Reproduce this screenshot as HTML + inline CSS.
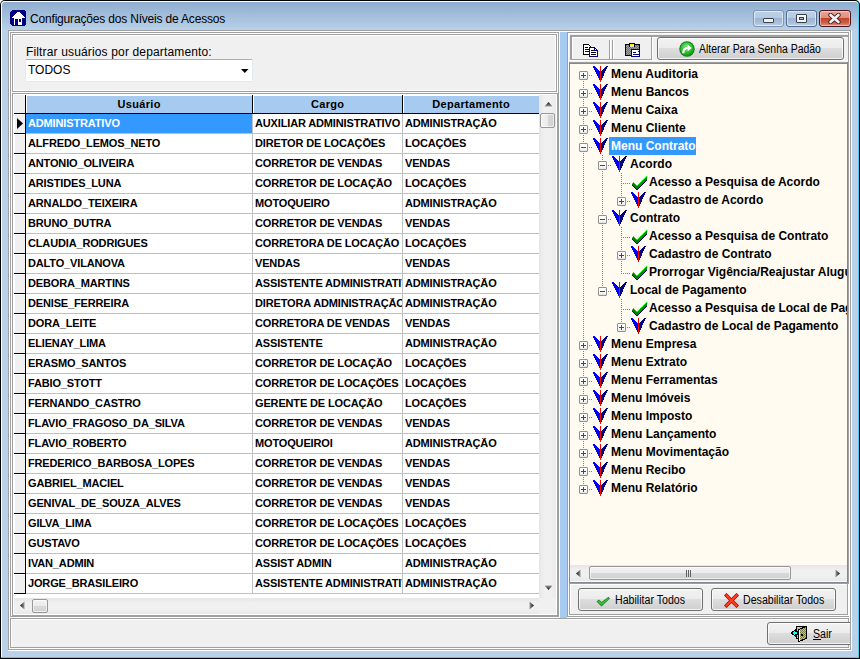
<!DOCTYPE html><html><head><meta charset="utf-8"><style>
html,body{margin:0;padding:0;}
body{width:860px;height:659px;position:relative;overflow:hidden;background:#fff;font-family:"Liberation Sans",sans-serif;}
div,span,svg{position:absolute;}
.t{white-space:pre;line-height:1;}
.b{font-weight:bold;}
.btn{box-sizing:border-box;border:1px solid #707070;border-radius:3px;
 background:linear-gradient(#F2F2F2 0%,#EBEBEB 50%,#DDDDDD 50%,#CFCFCF 100%);
 box-shadow:inset 0 0 0 1px rgba(255,255,255,.75);}
</style></head><body>

<div style="left:0px;top:0px;width:860px;height:659px;background:#000;border-radius:5px 5px 0 0"></div>
<div style="left:1px;top:1px;width:858px;height:657px;background:#4ccff0;border-radius:4px 4px 0 0"></div>
<div style="left:1px;top:1px;width:857px;height:656px;background:#fff;border-radius:4px 4px 0 0"></div>
<div style="left:2px;top:2px;width:856px;height:655px;background:linear-gradient(#8fadcf 0px,#b9d1ea 28px,#b9d1ea 100%);border-radius:3px 3px 0 0"></div>
<svg style="left:10px;top:10px" width="16" height="16" viewBox="0 0 16 16" shape-rendering="crispEdges">
<path d="M2 0H14L16 2V14L14 16H2L0 14V2Z" fill="#000080"/>
<path d="M2 8L7.5 2H9L15 8Z" fill="#fff"/>
<rect x="4" y="8" width="8" height="7" fill="#fff"/>
<rect x="5" y="9" width="3" height="6" fill="#000080"/>
<rect x="9" y="9" width="2" height="3" fill="#000080"/>
</svg>
<span class="t" style="left:30px;top:13px;font-size:12px;color:#000;letter-spacing:-0.18px">Configurações dos Níveis de Acessos</span>
<div style="left:753px;top:10px;width:31px;height:17px;box-sizing:border-box;border:1px solid #8093b0;border-radius:3px;background:linear-gradient(#bcd0e7 0%,#b5cbe4 45%,#9eb6d2 50%,#a6bdd8 75%,#bcd3ec 100%);box-shadow:inset 0 0 0 1px rgba(255,255,255,.55)"></div>
<div style="left:786px;top:10px;width:31px;height:17px;box-sizing:border-box;border:1px solid #56698a;border-radius:3px;background:linear-gradient(#bcd0e7 0%,#b5cbe4 45%,#9eb6d2 50%,#a6bdd8 75%,#bcd3ec 100%);box-shadow:inset 0 0 0 1px rgba(255,255,255,.55)"></div>
<div style="left:819px;top:10px;width:32px;height:17px;box-sizing:border-box;border:1px solid #4b1620;border-radius:3px;background:linear-gradient(#e9a596 0%,#e28e7c 45%,#c5452b 50%,#cc5a3f 75%,#e1917b 100%);box-shadow:inset 0 0 0 1px rgba(255,230,220,.55)"></div>
<div style="left:763px;top:18px;width:11px;height:5px;box-sizing:border-box;border:1px solid #3a3f4c;border-radius:1px;background:#f0f0f0"></div>
<div style="left:796px;top:14px;width:11px;height:9px;box-sizing:border-box;border:1px solid #3a3f4c;border-radius:1px;background:#f4f4f4"></div>
<div style="left:799px;top:17px;width:5px;height:3px;box-sizing:border-box;border:1px solid #3a3f4c;background:#a8bcd4"></div>
<svg style="left:828px;top:13px" width="13" height="11" viewBox="0 0 13 11">
<path d="M2.5 2L10.5 9M10.5 2L2.5 9" stroke="#3c2a2e" stroke-width="4.4" stroke-linecap="round"/>
<path d="M2.5 2L10.5 9M10.5 2L2.5 9" stroke="#f2f2f2" stroke-width="2.6" stroke-linecap="round"/>
</svg>
<div style="left:8px;top:30px;width:844px;height:621px;background:#F0F0F0"></div>
<div style="left:8px;top:30px;width:844px;height:1px;background:#A0A0A0"></div>
<div style="left:8px;top:30px;width:1px;height:621px;background:#A0A0A0"></div>
<div style="left:9px;top:31px;width:842px;height:1px;background:#FFFFFF"></div>
<div style="left:9px;top:31px;width:1px;height:619px;background:#FFFFFF"></div>
<div style="left:8px;top:650px;width:844px;height:1px;background:#FFFFFF"></div>
<div style="left:851px;top:30px;width:1px;height:621px;background:#FFFFFF"></div>
<div style="left:9px;top:649px;width:842px;height:1px;background:#A0A0A0"></div>
<div style="left:850px;top:31px;width:1px;height:619px;background:#A0A0A0"></div>
<div style="left:10px;top:32px;width:550px;height:1px;background:#A0A0A0"></div>
<div style="left:10px;top:32px;width:1px;height:585px;background:#A0A0A0"></div>
<div style="left:11px;top:33px;width:548px;height:1px;background:#FFFFFF"></div>
<div style="left:11px;top:33px;width:1px;height:583px;background:#FFFFFF"></div>
<div style="left:559px;top:32px;width:1px;height:586px;background:#FFFFFF"></div>
<div style="left:10px;top:617px;width:550px;height:1px;background:#FFFFFF"></div>
<div style="left:558px;top:33px;width:1px;height:584px;background:#A0A0A0"></div>
<div style="left:11px;top:616px;width:548px;height:1px;background:#A0A0A0"></div>
<div style="left:12px;top:34px;width:545px;height:1px;background:#A0A0A0"></div>
<div style="left:12px;top:34px;width:1px;height:58px;background:#A0A0A0"></div>
<div style="left:13px;top:35px;width:543px;height:1px;background:#FFFFFF"></div>
<div style="left:13px;top:35px;width:1px;height:56px;background:#FFFFFF"></div>
<div style="left:556px;top:34px;width:1px;height:58px;background:#A0A0A0"></div>
<div style="left:12px;top:91px;width:545px;height:1px;background:#A0A0A0"></div>
<div style="left:555px;top:35px;width:1px;height:56px;background:#FFFFFF"></div>
<div style="left:13px;top:90px;width:543px;height:1px;background:#FFFFFF"></div>
<div style="left:557px;top:34px;width:1px;height:59px;background:#FFFFFF"></div>
<div style="left:12px;top:92px;width:546px;height:1px;background:#FFFFFF"></div>
<span class="t" style="left:26px;top:46px;font-size:12px;color:#000;letter-spacing:0.15px">Filtrar usuários por departamento:</span>
<div style="left:25px;top:59px;width:228px;height:23px;box-sizing:border-box;border:1px solid #e3e9ef;border-top-color:#abadb3;border-radius:2px;background:#fff"></div>
<span class="t" style="left:28px;top:64px;font-size:12px;color:#000">TODOS</span>
<svg style="left:241px;top:69px" width="8" height="5" viewBox="0 0 8 5"><path d="M0 0H7.5L3.75 4Z" fill="#000"/></svg>
<div style="left:12px;top:93px;width:546px;height:1px;background:#A0A0A0"></div>
<div style="left:12px;top:93px;width:1px;height:522px;background:#A0A0A0"></div>
<div style="left:13px;top:94px;width:544px;height:1px;background:#FFFFFF"></div>
<div style="left:13px;top:94px;width:1px;height:520px;background:#FFFFFF"></div>
<div style="left:556px;top:94px;width:1px;height:521px;background:#FFFFFF"></div>
<div style="left:13px;top:614px;width:544px;height:1px;background:#FFFFFF"></div>
<div style="left:557px;top:93px;width:1px;height:523px;background:#A0A0A0"></div>
<div style="left:12px;top:615px;width:546px;height:1px;background:#A0A0A0"></div>
<div style="left:14px;top:95px;width:542px;height:519px;background:#fff"></div>
<div style="left:14px;top:95px;width:11px;height:18px;background:#F0F0F0"></div>
<div style="left:26px;top:95px;width:226px;height:18px;background:#A6CAF0"></div>
<div style="left:26px;top:95px;width:226px;height:1px;background:#FFFFFF"></div>
<div style="left:26px;top:95px;width:1px;height:18px;background:#FFFFFF"></div>
<span class="t b" style="left:26px;top:99px;width:226px;text-align:center;font-size:11px;color:#000;letter-spacing:0.3px;text-indent:0.3px">Usuário</span>
<div style="left:253px;top:95px;width:149px;height:18px;background:#A6CAF0"></div>
<div style="left:253px;top:95px;width:149px;height:1px;background:#FFFFFF"></div>
<div style="left:253px;top:95px;width:1px;height:18px;background:#FFFFFF"></div>
<span class="t b" style="left:253px;top:99px;width:149px;text-align:center;font-size:11px;color:#000;letter-spacing:0.3px;text-indent:0.3px">Cargo</span>
<div style="left:403px;top:95px;width:136px;height:18px;background:#A6CAF0"></div>
<div style="left:403px;top:95px;width:136px;height:1px;background:#FFFFFF"></div>
<div style="left:403px;top:95px;width:1px;height:18px;background:#FFFFFF"></div>
<span class="t b" style="left:403px;top:99px;width:136px;text-align:center;font-size:11px;color:#000;letter-spacing:0.3px;text-indent:0.3px">Departamento</span>
<div style="left:14px;top:113px;width:525px;height:1px;background:#000"></div>
<div style="left:25px;top:95px;width:1px;height:19px;background:#000"></div>
<div style="left:252px;top:95px;width:1px;height:19px;background:#000"></div>
<div style="left:402px;top:95px;width:1px;height:19px;background:#000"></div>
<div style="left:14px;top:114px;width:11px;height:19px;background:#F0F0F0"></div>
<div style="left:14px;top:114px;width:11px;height:1px;background:#FFFFFF"></div>
<div style="left:14px;top:114px;width:1px;height:19px;background:#FFFFFF"></div>
<div style="left:14px;top:133px;width:12px;height:1px;background:#000"></div>
<div style="left:25px;top:114px;width:1px;height:20px;background:#000"></div>
<div style="left:26px;top:114px;width:226px;height:19px;background:#3399FF"></div>
<span class="t b" style="left:28px;top:118px;width:224px;overflow:hidden;font-size:11px;color:#fff;letter-spacing:-0.15px">ADMINISTRATIVO</span>
<span class="t b" style="left:255px;top:118px;width:147px;overflow:hidden;font-size:11px;color:#000;letter-spacing:-0.15px">AUXILIAR ADMINISTRATIVO</span>
<span class="t b" style="left:405px;top:118px;width:134px;overflow:hidden;font-size:11px;color:#000;letter-spacing:-0.15px">ADMINISTRAÇÃO</span>
<div style="left:26px;top:133px;width:513px;height:1px;background:#C0C0C0"></div>
<div style="left:252px;top:114px;width:1px;height:20px;background:#C0C0C0"></div>
<div style="left:402px;top:114px;width:1px;height:20px;background:#C0C0C0"></div>
<div style="left:14px;top:134px;width:11px;height:19px;background:#F0F0F0"></div>
<div style="left:14px;top:134px;width:11px;height:1px;background:#FFFFFF"></div>
<div style="left:14px;top:134px;width:1px;height:19px;background:#FFFFFF"></div>
<div style="left:14px;top:153px;width:12px;height:1px;background:#000"></div>
<div style="left:25px;top:134px;width:1px;height:20px;background:#000"></div>
<span class="t b" style="left:28px;top:138px;width:224px;overflow:hidden;font-size:11px;color:#000;letter-spacing:-0.15px">ALFREDO_LEMOS_NETO</span>
<span class="t b" style="left:255px;top:138px;width:147px;overflow:hidden;font-size:11px;color:#000;letter-spacing:-0.15px">DIRETOR DE LOCAÇÕES</span>
<span class="t b" style="left:405px;top:138px;width:134px;overflow:hidden;font-size:11px;color:#000;letter-spacing:-0.15px">LOCAÇÕES</span>
<div style="left:26px;top:153px;width:513px;height:1px;background:#C0C0C0"></div>
<div style="left:252px;top:134px;width:1px;height:20px;background:#C0C0C0"></div>
<div style="left:402px;top:134px;width:1px;height:20px;background:#C0C0C0"></div>
<div style="left:14px;top:154px;width:11px;height:19px;background:#F0F0F0"></div>
<div style="left:14px;top:154px;width:11px;height:1px;background:#FFFFFF"></div>
<div style="left:14px;top:154px;width:1px;height:19px;background:#FFFFFF"></div>
<div style="left:14px;top:173px;width:12px;height:1px;background:#000"></div>
<div style="left:25px;top:154px;width:1px;height:20px;background:#000"></div>
<span class="t b" style="left:28px;top:158px;width:224px;overflow:hidden;font-size:11px;color:#000;letter-spacing:-0.15px">ANTONIO_OLIVEIRA</span>
<span class="t b" style="left:255px;top:158px;width:147px;overflow:hidden;font-size:11px;color:#000;letter-spacing:-0.15px">CORRETOR DE VENDAS</span>
<span class="t b" style="left:405px;top:158px;width:134px;overflow:hidden;font-size:11px;color:#000;letter-spacing:-0.15px">VENDAS</span>
<div style="left:26px;top:173px;width:513px;height:1px;background:#C0C0C0"></div>
<div style="left:252px;top:154px;width:1px;height:20px;background:#C0C0C0"></div>
<div style="left:402px;top:154px;width:1px;height:20px;background:#C0C0C0"></div>
<div style="left:14px;top:174px;width:11px;height:19px;background:#F0F0F0"></div>
<div style="left:14px;top:174px;width:11px;height:1px;background:#FFFFFF"></div>
<div style="left:14px;top:174px;width:1px;height:19px;background:#FFFFFF"></div>
<div style="left:14px;top:193px;width:12px;height:1px;background:#000"></div>
<div style="left:25px;top:174px;width:1px;height:20px;background:#000"></div>
<span class="t b" style="left:28px;top:178px;width:224px;overflow:hidden;font-size:11px;color:#000;letter-spacing:-0.15px">ARISTIDES_LUNA</span>
<span class="t b" style="left:255px;top:178px;width:147px;overflow:hidden;font-size:11px;color:#000;letter-spacing:-0.15px">CORRETOR DE LOCAÇÃO</span>
<span class="t b" style="left:405px;top:178px;width:134px;overflow:hidden;font-size:11px;color:#000;letter-spacing:-0.15px">LOCAÇÕES</span>
<div style="left:26px;top:193px;width:513px;height:1px;background:#C0C0C0"></div>
<div style="left:252px;top:174px;width:1px;height:20px;background:#C0C0C0"></div>
<div style="left:402px;top:174px;width:1px;height:20px;background:#C0C0C0"></div>
<div style="left:14px;top:194px;width:11px;height:19px;background:#F0F0F0"></div>
<div style="left:14px;top:194px;width:11px;height:1px;background:#FFFFFF"></div>
<div style="left:14px;top:194px;width:1px;height:19px;background:#FFFFFF"></div>
<div style="left:14px;top:213px;width:12px;height:1px;background:#000"></div>
<div style="left:25px;top:194px;width:1px;height:20px;background:#000"></div>
<span class="t b" style="left:28px;top:198px;width:224px;overflow:hidden;font-size:11px;color:#000;letter-spacing:-0.15px">ARNALDO_TEIXEIRA</span>
<span class="t b" style="left:255px;top:198px;width:147px;overflow:hidden;font-size:11px;color:#000;letter-spacing:-0.15px">MOTOQUEIRO</span>
<span class="t b" style="left:405px;top:198px;width:134px;overflow:hidden;font-size:11px;color:#000;letter-spacing:-0.15px">ADMINISTRAÇÃO</span>
<div style="left:26px;top:213px;width:513px;height:1px;background:#C0C0C0"></div>
<div style="left:252px;top:194px;width:1px;height:20px;background:#C0C0C0"></div>
<div style="left:402px;top:194px;width:1px;height:20px;background:#C0C0C0"></div>
<div style="left:14px;top:214px;width:11px;height:19px;background:#F0F0F0"></div>
<div style="left:14px;top:214px;width:11px;height:1px;background:#FFFFFF"></div>
<div style="left:14px;top:214px;width:1px;height:19px;background:#FFFFFF"></div>
<div style="left:14px;top:233px;width:12px;height:1px;background:#000"></div>
<div style="left:25px;top:214px;width:1px;height:20px;background:#000"></div>
<span class="t b" style="left:28px;top:218px;width:224px;overflow:hidden;font-size:11px;color:#000;letter-spacing:-0.15px">BRUNO_DUTRA</span>
<span class="t b" style="left:255px;top:218px;width:147px;overflow:hidden;font-size:11px;color:#000;letter-spacing:-0.15px">CORRETOR DE VENDAS</span>
<span class="t b" style="left:405px;top:218px;width:134px;overflow:hidden;font-size:11px;color:#000;letter-spacing:-0.15px">VENDAS</span>
<div style="left:26px;top:233px;width:513px;height:1px;background:#C0C0C0"></div>
<div style="left:252px;top:214px;width:1px;height:20px;background:#C0C0C0"></div>
<div style="left:402px;top:214px;width:1px;height:20px;background:#C0C0C0"></div>
<div style="left:14px;top:234px;width:11px;height:19px;background:#F0F0F0"></div>
<div style="left:14px;top:234px;width:11px;height:1px;background:#FFFFFF"></div>
<div style="left:14px;top:234px;width:1px;height:19px;background:#FFFFFF"></div>
<div style="left:14px;top:253px;width:12px;height:1px;background:#000"></div>
<div style="left:25px;top:234px;width:1px;height:20px;background:#000"></div>
<span class="t b" style="left:28px;top:238px;width:224px;overflow:hidden;font-size:11px;color:#000;letter-spacing:-0.15px">CLAUDIA_RODRIGUES</span>
<span class="t b" style="left:255px;top:238px;width:147px;overflow:hidden;font-size:11px;color:#000;letter-spacing:-0.15px">CORRETORA DE LOCAÇÃO</span>
<span class="t b" style="left:405px;top:238px;width:134px;overflow:hidden;font-size:11px;color:#000;letter-spacing:-0.15px">LOCAÇÕES</span>
<div style="left:26px;top:253px;width:513px;height:1px;background:#C0C0C0"></div>
<div style="left:252px;top:234px;width:1px;height:20px;background:#C0C0C0"></div>
<div style="left:402px;top:234px;width:1px;height:20px;background:#C0C0C0"></div>
<div style="left:14px;top:254px;width:11px;height:19px;background:#F0F0F0"></div>
<div style="left:14px;top:254px;width:11px;height:1px;background:#FFFFFF"></div>
<div style="left:14px;top:254px;width:1px;height:19px;background:#FFFFFF"></div>
<div style="left:14px;top:273px;width:12px;height:1px;background:#000"></div>
<div style="left:25px;top:254px;width:1px;height:20px;background:#000"></div>
<span class="t b" style="left:28px;top:258px;width:224px;overflow:hidden;font-size:11px;color:#000;letter-spacing:-0.15px">DALTO_VILANOVA</span>
<span class="t b" style="left:255px;top:258px;width:147px;overflow:hidden;font-size:11px;color:#000;letter-spacing:-0.15px">VENDAS</span>
<span class="t b" style="left:405px;top:258px;width:134px;overflow:hidden;font-size:11px;color:#000;letter-spacing:-0.15px">VENDAS</span>
<div style="left:26px;top:273px;width:513px;height:1px;background:#C0C0C0"></div>
<div style="left:252px;top:254px;width:1px;height:20px;background:#C0C0C0"></div>
<div style="left:402px;top:254px;width:1px;height:20px;background:#C0C0C0"></div>
<div style="left:14px;top:274px;width:11px;height:19px;background:#F0F0F0"></div>
<div style="left:14px;top:274px;width:11px;height:1px;background:#FFFFFF"></div>
<div style="left:14px;top:274px;width:1px;height:19px;background:#FFFFFF"></div>
<div style="left:14px;top:293px;width:12px;height:1px;background:#000"></div>
<div style="left:25px;top:274px;width:1px;height:20px;background:#000"></div>
<span class="t b" style="left:28px;top:278px;width:224px;overflow:hidden;font-size:11px;color:#000;letter-spacing:-0.15px">DEBORA_MARTINS</span>
<span class="t b" style="left:255px;top:278px;width:147px;overflow:hidden;font-size:11px;color:#000;letter-spacing:-0.15px">ASSISTENTE ADMINISTRATIVO</span>
<span class="t b" style="left:405px;top:278px;width:134px;overflow:hidden;font-size:11px;color:#000;letter-spacing:-0.15px">ADMINISTRAÇÃO</span>
<div style="left:26px;top:293px;width:513px;height:1px;background:#C0C0C0"></div>
<div style="left:252px;top:274px;width:1px;height:20px;background:#C0C0C0"></div>
<div style="left:402px;top:274px;width:1px;height:20px;background:#C0C0C0"></div>
<div style="left:14px;top:294px;width:11px;height:19px;background:#F0F0F0"></div>
<div style="left:14px;top:294px;width:11px;height:1px;background:#FFFFFF"></div>
<div style="left:14px;top:294px;width:1px;height:19px;background:#FFFFFF"></div>
<div style="left:14px;top:313px;width:12px;height:1px;background:#000"></div>
<div style="left:25px;top:294px;width:1px;height:20px;background:#000"></div>
<span class="t b" style="left:28px;top:298px;width:224px;overflow:hidden;font-size:11px;color:#000;letter-spacing:-0.15px">DENISE_FERREIRA</span>
<span class="t b" style="left:255px;top:298px;width:147px;overflow:hidden;font-size:11px;color:#000;letter-spacing:-0.15px">DIRETORA ADMINISTRAÇÃO</span>
<span class="t b" style="left:405px;top:298px;width:134px;overflow:hidden;font-size:11px;color:#000;letter-spacing:-0.15px">ADMINISTRAÇÃO</span>
<div style="left:26px;top:313px;width:513px;height:1px;background:#C0C0C0"></div>
<div style="left:252px;top:294px;width:1px;height:20px;background:#C0C0C0"></div>
<div style="left:402px;top:294px;width:1px;height:20px;background:#C0C0C0"></div>
<div style="left:14px;top:314px;width:11px;height:19px;background:#F0F0F0"></div>
<div style="left:14px;top:314px;width:11px;height:1px;background:#FFFFFF"></div>
<div style="left:14px;top:314px;width:1px;height:19px;background:#FFFFFF"></div>
<div style="left:14px;top:333px;width:12px;height:1px;background:#000"></div>
<div style="left:25px;top:314px;width:1px;height:20px;background:#000"></div>
<span class="t b" style="left:28px;top:318px;width:224px;overflow:hidden;font-size:11px;color:#000;letter-spacing:-0.15px">DORA_LEITE</span>
<span class="t b" style="left:255px;top:318px;width:147px;overflow:hidden;font-size:11px;color:#000;letter-spacing:-0.15px">CORRETORA DE VENDAS</span>
<span class="t b" style="left:405px;top:318px;width:134px;overflow:hidden;font-size:11px;color:#000;letter-spacing:-0.15px">VENDAS</span>
<div style="left:26px;top:333px;width:513px;height:1px;background:#C0C0C0"></div>
<div style="left:252px;top:314px;width:1px;height:20px;background:#C0C0C0"></div>
<div style="left:402px;top:314px;width:1px;height:20px;background:#C0C0C0"></div>
<div style="left:14px;top:334px;width:11px;height:19px;background:#F0F0F0"></div>
<div style="left:14px;top:334px;width:11px;height:1px;background:#FFFFFF"></div>
<div style="left:14px;top:334px;width:1px;height:19px;background:#FFFFFF"></div>
<div style="left:14px;top:353px;width:12px;height:1px;background:#000"></div>
<div style="left:25px;top:334px;width:1px;height:20px;background:#000"></div>
<span class="t b" style="left:28px;top:338px;width:224px;overflow:hidden;font-size:11px;color:#000;letter-spacing:-0.15px">ELIENAY_LIMA</span>
<span class="t b" style="left:255px;top:338px;width:147px;overflow:hidden;font-size:11px;color:#000;letter-spacing:-0.15px">ASSISTENTE</span>
<span class="t b" style="left:405px;top:338px;width:134px;overflow:hidden;font-size:11px;color:#000;letter-spacing:-0.15px">ADMINISTRAÇÃO</span>
<div style="left:26px;top:353px;width:513px;height:1px;background:#C0C0C0"></div>
<div style="left:252px;top:334px;width:1px;height:20px;background:#C0C0C0"></div>
<div style="left:402px;top:334px;width:1px;height:20px;background:#C0C0C0"></div>
<div style="left:14px;top:354px;width:11px;height:19px;background:#F0F0F0"></div>
<div style="left:14px;top:354px;width:11px;height:1px;background:#FFFFFF"></div>
<div style="left:14px;top:354px;width:1px;height:19px;background:#FFFFFF"></div>
<div style="left:14px;top:373px;width:12px;height:1px;background:#000"></div>
<div style="left:25px;top:354px;width:1px;height:20px;background:#000"></div>
<span class="t b" style="left:28px;top:358px;width:224px;overflow:hidden;font-size:11px;color:#000;letter-spacing:-0.15px">ERASMO_SANTOS</span>
<span class="t b" style="left:255px;top:358px;width:147px;overflow:hidden;font-size:11px;color:#000;letter-spacing:-0.15px">CORRETOR DE LOCAÇÃO</span>
<span class="t b" style="left:405px;top:358px;width:134px;overflow:hidden;font-size:11px;color:#000;letter-spacing:-0.15px">LOCAÇÕES</span>
<div style="left:26px;top:373px;width:513px;height:1px;background:#C0C0C0"></div>
<div style="left:252px;top:354px;width:1px;height:20px;background:#C0C0C0"></div>
<div style="left:402px;top:354px;width:1px;height:20px;background:#C0C0C0"></div>
<div style="left:14px;top:374px;width:11px;height:19px;background:#F0F0F0"></div>
<div style="left:14px;top:374px;width:11px;height:1px;background:#FFFFFF"></div>
<div style="left:14px;top:374px;width:1px;height:19px;background:#FFFFFF"></div>
<div style="left:14px;top:393px;width:12px;height:1px;background:#000"></div>
<div style="left:25px;top:374px;width:1px;height:20px;background:#000"></div>
<span class="t b" style="left:28px;top:378px;width:224px;overflow:hidden;font-size:11px;color:#000;letter-spacing:-0.15px">FABIO_STOTT</span>
<span class="t b" style="left:255px;top:378px;width:147px;overflow:hidden;font-size:11px;color:#000;letter-spacing:-0.15px">CORRETOR DE LOCAÇÕES</span>
<span class="t b" style="left:405px;top:378px;width:134px;overflow:hidden;font-size:11px;color:#000;letter-spacing:-0.15px">LOCAÇÕES</span>
<div style="left:26px;top:393px;width:513px;height:1px;background:#C0C0C0"></div>
<div style="left:252px;top:374px;width:1px;height:20px;background:#C0C0C0"></div>
<div style="left:402px;top:374px;width:1px;height:20px;background:#C0C0C0"></div>
<div style="left:14px;top:394px;width:11px;height:19px;background:#F0F0F0"></div>
<div style="left:14px;top:394px;width:11px;height:1px;background:#FFFFFF"></div>
<div style="left:14px;top:394px;width:1px;height:19px;background:#FFFFFF"></div>
<div style="left:14px;top:413px;width:12px;height:1px;background:#000"></div>
<div style="left:25px;top:394px;width:1px;height:20px;background:#000"></div>
<span class="t b" style="left:28px;top:398px;width:224px;overflow:hidden;font-size:11px;color:#000;letter-spacing:-0.15px">FERNANDO_CASTRO</span>
<span class="t b" style="left:255px;top:398px;width:147px;overflow:hidden;font-size:11px;color:#000;letter-spacing:-0.15px">GERENTE DE LOCAÇÃO</span>
<span class="t b" style="left:405px;top:398px;width:134px;overflow:hidden;font-size:11px;color:#000;letter-spacing:-0.15px">LOCAÇÕES</span>
<div style="left:26px;top:413px;width:513px;height:1px;background:#C0C0C0"></div>
<div style="left:252px;top:394px;width:1px;height:20px;background:#C0C0C0"></div>
<div style="left:402px;top:394px;width:1px;height:20px;background:#C0C0C0"></div>
<div style="left:14px;top:414px;width:11px;height:19px;background:#F0F0F0"></div>
<div style="left:14px;top:414px;width:11px;height:1px;background:#FFFFFF"></div>
<div style="left:14px;top:414px;width:1px;height:19px;background:#FFFFFF"></div>
<div style="left:14px;top:433px;width:12px;height:1px;background:#000"></div>
<div style="left:25px;top:414px;width:1px;height:20px;background:#000"></div>
<span class="t b" style="left:28px;top:418px;width:224px;overflow:hidden;font-size:11px;color:#000;letter-spacing:-0.15px">FLAVIO_FRAGOSO_DA_SILVA</span>
<span class="t b" style="left:255px;top:418px;width:147px;overflow:hidden;font-size:11px;color:#000;letter-spacing:-0.15px">CORRETOR DE VENDAS</span>
<span class="t b" style="left:405px;top:418px;width:134px;overflow:hidden;font-size:11px;color:#000;letter-spacing:-0.15px">VENDAS</span>
<div style="left:26px;top:433px;width:513px;height:1px;background:#C0C0C0"></div>
<div style="left:252px;top:414px;width:1px;height:20px;background:#C0C0C0"></div>
<div style="left:402px;top:414px;width:1px;height:20px;background:#C0C0C0"></div>
<div style="left:14px;top:434px;width:11px;height:19px;background:#F0F0F0"></div>
<div style="left:14px;top:434px;width:11px;height:1px;background:#FFFFFF"></div>
<div style="left:14px;top:434px;width:1px;height:19px;background:#FFFFFF"></div>
<div style="left:14px;top:453px;width:12px;height:1px;background:#000"></div>
<div style="left:25px;top:434px;width:1px;height:20px;background:#000"></div>
<span class="t b" style="left:28px;top:438px;width:224px;overflow:hidden;font-size:11px;color:#000;letter-spacing:-0.15px">FLAVIO_ROBERTO</span>
<span class="t b" style="left:255px;top:438px;width:147px;overflow:hidden;font-size:11px;color:#000;letter-spacing:-0.15px">MOTOQUEIROI</span>
<span class="t b" style="left:405px;top:438px;width:134px;overflow:hidden;font-size:11px;color:#000;letter-spacing:-0.15px">ADMINISTRAÇÃO</span>
<div style="left:26px;top:453px;width:513px;height:1px;background:#C0C0C0"></div>
<div style="left:252px;top:434px;width:1px;height:20px;background:#C0C0C0"></div>
<div style="left:402px;top:434px;width:1px;height:20px;background:#C0C0C0"></div>
<div style="left:14px;top:454px;width:11px;height:19px;background:#F0F0F0"></div>
<div style="left:14px;top:454px;width:11px;height:1px;background:#FFFFFF"></div>
<div style="left:14px;top:454px;width:1px;height:19px;background:#FFFFFF"></div>
<div style="left:14px;top:473px;width:12px;height:1px;background:#000"></div>
<div style="left:25px;top:454px;width:1px;height:20px;background:#000"></div>
<span class="t b" style="left:28px;top:458px;width:224px;overflow:hidden;font-size:11px;color:#000;letter-spacing:-0.15px">FREDERICO_BARBOSA_LOPES</span>
<span class="t b" style="left:255px;top:458px;width:147px;overflow:hidden;font-size:11px;color:#000;letter-spacing:-0.15px">CORRETOR DE VENDAS</span>
<span class="t b" style="left:405px;top:458px;width:134px;overflow:hidden;font-size:11px;color:#000;letter-spacing:-0.15px">VENDAS</span>
<div style="left:26px;top:473px;width:513px;height:1px;background:#C0C0C0"></div>
<div style="left:252px;top:454px;width:1px;height:20px;background:#C0C0C0"></div>
<div style="left:402px;top:454px;width:1px;height:20px;background:#C0C0C0"></div>
<div style="left:14px;top:474px;width:11px;height:19px;background:#F0F0F0"></div>
<div style="left:14px;top:474px;width:11px;height:1px;background:#FFFFFF"></div>
<div style="left:14px;top:474px;width:1px;height:19px;background:#FFFFFF"></div>
<div style="left:14px;top:493px;width:12px;height:1px;background:#000"></div>
<div style="left:25px;top:474px;width:1px;height:20px;background:#000"></div>
<span class="t b" style="left:28px;top:478px;width:224px;overflow:hidden;font-size:11px;color:#000;letter-spacing:-0.15px">GABRIEL_MACIEL</span>
<span class="t b" style="left:255px;top:478px;width:147px;overflow:hidden;font-size:11px;color:#000;letter-spacing:-0.15px">CORRETOR DE VENDAS</span>
<span class="t b" style="left:405px;top:478px;width:134px;overflow:hidden;font-size:11px;color:#000;letter-spacing:-0.15px">VENDAS</span>
<div style="left:26px;top:493px;width:513px;height:1px;background:#C0C0C0"></div>
<div style="left:252px;top:474px;width:1px;height:20px;background:#C0C0C0"></div>
<div style="left:402px;top:474px;width:1px;height:20px;background:#C0C0C0"></div>
<div style="left:14px;top:494px;width:11px;height:19px;background:#F0F0F0"></div>
<div style="left:14px;top:494px;width:11px;height:1px;background:#FFFFFF"></div>
<div style="left:14px;top:494px;width:1px;height:19px;background:#FFFFFF"></div>
<div style="left:14px;top:513px;width:12px;height:1px;background:#000"></div>
<div style="left:25px;top:494px;width:1px;height:20px;background:#000"></div>
<span class="t b" style="left:28px;top:498px;width:224px;overflow:hidden;font-size:11px;color:#000;letter-spacing:-0.15px">GENIVAL_DE_SOUZA_ALVES</span>
<span class="t b" style="left:255px;top:498px;width:147px;overflow:hidden;font-size:11px;color:#000;letter-spacing:-0.15px">CORRETOR DE VENDAS</span>
<span class="t b" style="left:405px;top:498px;width:134px;overflow:hidden;font-size:11px;color:#000;letter-spacing:-0.15px">VENDAS</span>
<div style="left:26px;top:513px;width:513px;height:1px;background:#C0C0C0"></div>
<div style="left:252px;top:494px;width:1px;height:20px;background:#C0C0C0"></div>
<div style="left:402px;top:494px;width:1px;height:20px;background:#C0C0C0"></div>
<div style="left:14px;top:514px;width:11px;height:19px;background:#F0F0F0"></div>
<div style="left:14px;top:514px;width:11px;height:1px;background:#FFFFFF"></div>
<div style="left:14px;top:514px;width:1px;height:19px;background:#FFFFFF"></div>
<div style="left:14px;top:533px;width:12px;height:1px;background:#000"></div>
<div style="left:25px;top:514px;width:1px;height:20px;background:#000"></div>
<span class="t b" style="left:28px;top:518px;width:224px;overflow:hidden;font-size:11px;color:#000;letter-spacing:-0.15px">GILVA_LIMA</span>
<span class="t b" style="left:255px;top:518px;width:147px;overflow:hidden;font-size:11px;color:#000;letter-spacing:-0.15px">CORRETOR DE LOCAÇÕES</span>
<span class="t b" style="left:405px;top:518px;width:134px;overflow:hidden;font-size:11px;color:#000;letter-spacing:-0.15px">LOCAÇÕES</span>
<div style="left:26px;top:533px;width:513px;height:1px;background:#C0C0C0"></div>
<div style="left:252px;top:514px;width:1px;height:20px;background:#C0C0C0"></div>
<div style="left:402px;top:514px;width:1px;height:20px;background:#C0C0C0"></div>
<div style="left:14px;top:534px;width:11px;height:19px;background:#F0F0F0"></div>
<div style="left:14px;top:534px;width:11px;height:1px;background:#FFFFFF"></div>
<div style="left:14px;top:534px;width:1px;height:19px;background:#FFFFFF"></div>
<div style="left:14px;top:553px;width:12px;height:1px;background:#000"></div>
<div style="left:25px;top:534px;width:1px;height:20px;background:#000"></div>
<span class="t b" style="left:28px;top:538px;width:224px;overflow:hidden;font-size:11px;color:#000;letter-spacing:-0.15px">GUSTAVO</span>
<span class="t b" style="left:255px;top:538px;width:147px;overflow:hidden;font-size:11px;color:#000;letter-spacing:-0.15px">CORRETOR DE LOCAÇÕES</span>
<span class="t b" style="left:405px;top:538px;width:134px;overflow:hidden;font-size:11px;color:#000;letter-spacing:-0.15px">LOCAÇÕES</span>
<div style="left:26px;top:553px;width:513px;height:1px;background:#C0C0C0"></div>
<div style="left:252px;top:534px;width:1px;height:20px;background:#C0C0C0"></div>
<div style="left:402px;top:534px;width:1px;height:20px;background:#C0C0C0"></div>
<div style="left:14px;top:554px;width:11px;height:19px;background:#F0F0F0"></div>
<div style="left:14px;top:554px;width:11px;height:1px;background:#FFFFFF"></div>
<div style="left:14px;top:554px;width:1px;height:19px;background:#FFFFFF"></div>
<div style="left:14px;top:573px;width:12px;height:1px;background:#000"></div>
<div style="left:25px;top:554px;width:1px;height:20px;background:#000"></div>
<span class="t b" style="left:28px;top:558px;width:224px;overflow:hidden;font-size:11px;color:#000;letter-spacing:-0.15px">IVAN_ADMIN</span>
<span class="t b" style="left:255px;top:558px;width:147px;overflow:hidden;font-size:11px;color:#000;letter-spacing:-0.15px">ASSIST ADMIN</span>
<span class="t b" style="left:405px;top:558px;width:134px;overflow:hidden;font-size:11px;color:#000;letter-spacing:-0.15px">ADMINISTRAÇÃO</span>
<div style="left:26px;top:573px;width:513px;height:1px;background:#C0C0C0"></div>
<div style="left:252px;top:554px;width:1px;height:20px;background:#C0C0C0"></div>
<div style="left:402px;top:554px;width:1px;height:20px;background:#C0C0C0"></div>
<div style="left:14px;top:574px;width:11px;height:19px;background:#F0F0F0"></div>
<div style="left:14px;top:574px;width:11px;height:1px;background:#FFFFFF"></div>
<div style="left:14px;top:574px;width:1px;height:19px;background:#FFFFFF"></div>
<div style="left:14px;top:593px;width:12px;height:1px;background:#000"></div>
<div style="left:25px;top:574px;width:1px;height:20px;background:#000"></div>
<span class="t b" style="left:28px;top:578px;width:224px;overflow:hidden;font-size:11px;color:#000;letter-spacing:-0.15px">JORGE_BRASILEIRO</span>
<span class="t b" style="left:255px;top:578px;width:147px;overflow:hidden;font-size:11px;color:#000;letter-spacing:-0.15px">ASSISTENTE ADMINISTRATIVO</span>
<span class="t b" style="left:405px;top:578px;width:134px;overflow:hidden;font-size:11px;color:#000;letter-spacing:-0.15px">ADMINISTRAÇÃO</span>
<div style="left:26px;top:593px;width:513px;height:1px;background:#C0C0C0"></div>
<div style="left:252px;top:574px;width:1px;height:20px;background:#C0C0C0"></div>
<div style="left:402px;top:574px;width:1px;height:20px;background:#C0C0C0"></div>
<svg style="left:17px;top:118px" width="7" height="12" viewBox="0 0 7 12"><path d="M0 0L6 5.5L0 11Z" fill="#000"/></svg>
<div style="left:539px;top:95px;width:17px;height:503px;background:linear-gradient(90deg,#e6e6e6,#f0f0f0 30%,#f0f0f0 70%,#e9e9e9)"></div>
<svg style="left:544px;top:101px" width="9" height="6" viewBox="0 0 9 6"><defs><linearGradient id="gu" x1="0" y1="0" x2="0" y2="1"><stop offset="0" stop-color="#111"/><stop offset="1" stop-color="#9a9a9a"/></linearGradient></defs><path d="M0.5 5.5H8.5L4.5 1Z" fill="url(#gu)"/></svg>
<svg style="left:544px;top:585px" width="9" height="6" viewBox="0 0 9 6"><defs><linearGradient id="gd" x1="0" y1="1" x2="0" y2="0"><stop offset="0" stop-color="#111"/><stop offset="1" stop-color="#9a9a9a"/></linearGradient></defs><path d="M0.5 0.5H8.5L4.5 5Z" fill="url(#gd)"/></svg>
<div style="left:540px;top:113px;width:15px;height:15px;box-sizing:border-box;border:1px solid #979797;border-radius:2px;background:linear-gradient(90deg,#f2f2f2 0%,#ebebeb 50%,#d9d9da 50%,#d0d0d2 100%);box-shadow:inset 0 0 0 1px rgba(255,255,255,.6)"></div>
<div style="left:14px;top:598px;width:525px;height:16px;background:linear-gradient(#e6e6e6,#f0f0f0 30%,#f0f0f0 70%,#e9e9e9)"></div>
<svg style="left:19px;top:601px" width="6" height="9" viewBox="0 0 6 9"><defs><linearGradient id="gl" x1="0" y1="0" x2="1" y2="0"><stop offset="0" stop-color="#111"/><stop offset="1" stop-color="#9a9a9a"/></linearGradient></defs><path d="M5.5 0.5V8.5L1 4.5Z" fill="url(#gl)"/></svg>
<svg style="left:529px;top:601px" width="6" height="9" viewBox="0 0 6 9"><defs><linearGradient id="gr" x1="1" y1="0" x2="0" y2="0"><stop offset="0" stop-color="#111"/><stop offset="1" stop-color="#9a9a9a"/></linearGradient></defs><path d="M0.5 0.5V8.5L5 4.5Z" fill="url(#gr)"/></svg>
<div style="left:32px;top:599px;width:16px;height:14px;box-sizing:border-box;border:1px solid #979797;border-radius:2px;background:linear-gradient(#f2f2f2 0%,#ebebeb 50%,#d9d9da 50%,#d0d0d2 100%);box-shadow:inset 0 0 0 1px rgba(255,255,255,.6)"></div>
<div style="left:539px;top:598px;width:17px;height:16px;background:#F0F0F0"></div>
<div style="left:560px;top:32px;width:7px;height:586px;background:#A6CAF0"></div>
<div style="left:567px;top:32px;width:1px;height:586px;background:#A0A0A0"></div>
<div style="left:567px;top:32px;width:283px;height:1px;background:#A0A0A0"></div>
<div style="left:568px;top:33px;width:1px;height:584px;background:#FFFFFF"></div>
<div style="left:568px;top:33px;width:281px;height:1px;background:#FFFFFF"></div>
<div style="left:849px;top:32px;width:1px;height:586px;background:#FFFFFF"></div>
<div style="left:567px;top:617px;width:283px;height:1px;background:#FFFFFF"></div>
<div style="left:848px;top:33px;width:1px;height:584px;background:#A0A0A0"></div>
<div style="left:568px;top:616px;width:281px;height:1px;background:#A0A0A0"></div>
<div style="left:570px;top:35px;width:278px;height:1px;background:#A0A0A0"></div>
<div style="left:570px;top:36px;width:278px;height:1px;background:#A0A0A0"></div>
<div style="left:570px;top:35px;width:1px;height:25px;background:#A0A0A0"></div>
<div style="left:571px;top:35px;width:1px;height:25px;background:#A0A0A0"></div>
<div style="left:572px;top:37px;width:275px;height:1px;background:#FFFFFF"></div>
<div style="left:572px;top:37px;width:1px;height:22px;background:#FFFFFF"></div>
<div style="left:570px;top:59px;width:82px;height:1px;background:#A0A0A0"></div>
<div style="left:651px;top:37px;width:1px;height:23px;background:#A0A0A0"></div>
<div style="left:652px;top:37px;width:1px;height:24px;background:#FFFFFF"></div>
<div style="left:570px;top:60px;width:278px;height:1px;background:#FFFFFF"></div>
<div style="left:609px;top:40px;width:1px;height:19px;background:#A0A0A0"></div>
<div style="left:612px;top:40px;width:1px;height:19px;background:#A0A0A0"></div>
<div style="left:610px;top:40px;width:1px;height:19px;background:#FFFFFF"></div>
<div style="left:613px;top:40px;width:1px;height:19px;background:#FFFFFF"></div>
<svg style="left:583px;top:44px" width="16" height="14" viewBox="0 0 16 14" shape-rendering="crispEdges">
<path d="M0.5 0.5H5.5L7.5 2.5V10.5H0.5Z" fill="#fff" stroke="#000"/>
<rect x="2" y="3" width="3" height="1" fill="#000"/><rect x="2" y="5" width="5" height="1" fill="#000"/><rect x="2" y="7" width="5" height="1" fill="#000"/>
<path d="M6.5 3.5H11.5L14.5 6.5V12.5H6.5Z" fill="#fff" stroke="#000080"/>
<rect x="11" y="4" width="1" height="3" fill="#000080"/><rect x="11" y="6" width="3" height="1" fill="#000080"/>
<rect x="8" y="6" width="3" height="1" fill="#000"/><rect x="8" y="8" width="5" height="1" fill="#000"/><rect x="8" y="10" width="5" height="1" fill="#000"/>
</svg>
<svg style="left:625px;top:43px" width="16" height="14" viewBox="0 0 16 14" shape-rendering="crispEdges">
<defs><pattern id="ck2" width="2" height="2" patternUnits="userSpaceOnUse"><rect width="2" height="2" fill="#808000"/><rect width="1" height="1" fill="#a0a0a0"/><rect x="1" y="1" width="1" height="1" fill="#a0a0a0"/></pattern></defs>
<path d="M0.5 1.5H14.5V12.5H0.5Z" fill="url(#ck2)" stroke="#000"/>
<path d="M4.5 0.5H9.5V3.5H4.5Z" fill="#ffff00" stroke="#000"/>
<rect x="4" y="3" width="6" height="1" fill="#000"/><rect x="5" y="3" width="4" height="1" fill="#e0e0e0"/>
<path d="M6.5 6.5H14.5V13.5H6.5Z" fill="#fff" stroke="#000080"/>
<rect x="13" y="8" width="1" height="1" fill="#000080"/>
<rect x="8" y="9" width="3" height="1" fill="#000080"/><rect x="8" y="11" width="6" height="1" fill="#000080"/>
</svg>
<div class="btn" style="left:657px;top:37px;width:187px;height:23px"></div>
<svg style="left:679px;top:41px" width="16" height="16" viewBox="0 0 16 16">
<defs><radialGradient id="gg" cx="0.45" cy="0.35" r="0.65"><stop offset="0" stop-color="#7ee87e"/><stop offset="0.6" stop-color="#2fbf2f"/><stop offset="1" stop-color="#169a16"/></radialGradient></defs>
<circle cx="8" cy="8" r="7.7" fill="#0f7f0f"/>
<circle cx="8" cy="8" r="6.8" fill="url(#gg)"/>
<path d="M4.2 12.3C4.2 8.6 6.2 6.9 9.2 6.9" stroke="#fff" stroke-width="2.3" fill="none"/>
<path d="M8.6 3.4L12.8 7L8.6 10.6Z" fill="#fff"/>
</svg>
<span class="t" style="left:699px;top:43px;font-size:12px;color:#000;transform:scaleX(0.87);transform-origin:0 0">Alterar Para Senha Padão</span>
<div style="left:569px;top:62px;width:279px;height:1px;background:#a0a0a0"></div>
<div style="left:569px;top:63px;width:279px;height:1px;background:#828790"></div>
<div style="left:569px;top:62px;width:1px;height:521px;background:#828790"></div>
<div style="left:569px;top:582px;width:279px;height:1px;background:#828790"></div>
<div style="left:569px;top:583px;width:279px;height:1px;background:#9a9ea6"></div>
<div style="left:847px;top:62px;width:1px;height:521px;background:#828790"></div>
<div style="left:570px;top:64px;width:277px;height:518px;background:#FFFBF0"></div>
<div style="left:570px;top:565px;width:277px;height:16px;background:linear-gradient(#e6e6e6,#f0f0f0 30%,#f0f0f0 70%,#e9e9e9)"></div>
<svg style="left:575px;top:569px" width="6" height="9" viewBox="0 0 6 9"><path d="M5.5 0.5V8.5L1 4.5Z" fill="url(#gl)"/></svg>
<svg style="left:835px;top:569px" width="6" height="9" viewBox="0 0 6 9"><path d="M0.5 0.5V8.5L5 4.5Z" fill="url(#gr)"/></svg>
<div style="left:589px;top:566px;width:202px;height:14px;box-sizing:border-box;border:1px solid #979797;border-radius:2px;background:linear-gradient(#f2f2f2 0%,#ebebeb 50%,#d9d9da 50%,#d0d0d2 100%);box-shadow:inset 0 0 0 1px rgba(255,255,255,.6)"></div>
<div style="left:686px;top:570px;width:1px;height:7px;background:#606060"></div>
<div style="left:688px;top:570px;width:1px;height:7px;background:#606060"></div>
<div style="left:690px;top:570px;width:1px;height:7px;background:#606060"></div>
<div style="left:570px;top:63px;width:277px;height:502px;overflow:hidden">
<div style="left:13px;top:18px;width:1px;height:405px;background-image:repeating-linear-gradient(180deg,#808080 0 1px,transparent 1px 2px)"></div>
<div style="left:32px;top:92px;width:1px;height:133px;background-image:repeating-linear-gradient(180deg,#808080 0 1px,transparent 1px 2px)"></div>
<div style="left:51px;top:110px;width:1px;height:25px;background-image:repeating-linear-gradient(180deg,#808080 0 1px,transparent 1px 2px)"></div>
<div style="left:51px;top:164px;width:1px;height:47px;background-image:repeating-linear-gradient(180deg,#808080 0 1px,transparent 1px 2px)"></div>
<div style="left:51px;top:236px;width:1px;height:25px;background-image:repeating-linear-gradient(180deg,#808080 0 1px,transparent 1px 2px)"></div>
<div style="left:19px;top:12px;width:3px;height:1px;background-image:repeating-linear-gradient(90deg,#808080 0 1px,transparent 1px 2px)"></div>
<div style="left:9px;top:8px;width:9px;height:9px;box-sizing:border-box;border:1px solid #919191;border-radius:1px;background:linear-gradient(#fff 0%,#fff 50%,#e6e6e6 100%)"></div>
<div style="left:11px;top:12px;width:5px;height:1px;background:#1f4f99"></div>
<div style="left:13px;top:10px;width:1px;height:5px;background:#1f4f99"></div>
<svg style="left:23px;top:3px" width="16" height="17" viewBox="0 0 16 17" shape-rendering="crispEdges">
<path d="M0 0L1 0L7 5L7 15.5L0 0.5Z" fill="#0000FF"/>
<path d="M14.5 0L13.5 0L8 5L8 15.5L14.5 0.5Z" fill="#000080"/>
<rect x="7" y="0" width="1" height="16" fill="#FF0000"/>
</svg>
<span class="t b" style="left:41px;top:5px;font-size:12px;color:#000">Menu Auditoria</span>
<div style="left:19px;top:30px;width:3px;height:1px;background-image:repeating-linear-gradient(90deg,#808080 0 1px,transparent 1px 2px)"></div>
<div style="left:9px;top:26px;width:9px;height:9px;box-sizing:border-box;border:1px solid #919191;border-radius:1px;background:linear-gradient(#fff 0%,#fff 50%,#e6e6e6 100%)"></div>
<div style="left:11px;top:30px;width:5px;height:1px;background:#1f4f99"></div>
<div style="left:13px;top:28px;width:1px;height:5px;background:#1f4f99"></div>
<svg style="left:23px;top:21px" width="16" height="17" viewBox="0 0 16 17" shape-rendering="crispEdges">
<path d="M0 0L1 0L7 5L7 15.5L0 0.5Z" fill="#0000FF"/>
<path d="M14.5 0L13.5 0L8 5L8 15.5L14.5 0.5Z" fill="#000080"/>
<rect x="7" y="0" width="1" height="16" fill="#FF0000"/>
</svg>
<span class="t b" style="left:41px;top:23px;font-size:12px;color:#000">Menu Bancos</span>
<div style="left:19px;top:48px;width:3px;height:1px;background-image:repeating-linear-gradient(90deg,#808080 0 1px,transparent 1px 2px)"></div>
<div style="left:9px;top:44px;width:9px;height:9px;box-sizing:border-box;border:1px solid #919191;border-radius:1px;background:linear-gradient(#fff 0%,#fff 50%,#e6e6e6 100%)"></div>
<div style="left:11px;top:48px;width:5px;height:1px;background:#1f4f99"></div>
<div style="left:13px;top:46px;width:1px;height:5px;background:#1f4f99"></div>
<svg style="left:23px;top:39px" width="16" height="17" viewBox="0 0 16 17" shape-rendering="crispEdges">
<path d="M0 0L1 0L7 5L7 15.5L0 0.5Z" fill="#0000FF"/>
<path d="M14.5 0L13.5 0L8 5L8 15.5L14.5 0.5Z" fill="#000080"/>
<rect x="7" y="0" width="1" height="16" fill="#FF0000"/>
</svg>
<span class="t b" style="left:41px;top:41px;font-size:12px;color:#000">Menu Caixa</span>
<div style="left:19px;top:66px;width:3px;height:1px;background-image:repeating-linear-gradient(90deg,#808080 0 1px,transparent 1px 2px)"></div>
<div style="left:9px;top:62px;width:9px;height:9px;box-sizing:border-box;border:1px solid #919191;border-radius:1px;background:linear-gradient(#fff 0%,#fff 50%,#e6e6e6 100%)"></div>
<div style="left:11px;top:66px;width:5px;height:1px;background:#1f4f99"></div>
<div style="left:13px;top:64px;width:1px;height:5px;background:#1f4f99"></div>
<svg style="left:23px;top:57px" width="16" height="17" viewBox="0 0 16 17" shape-rendering="crispEdges">
<path d="M0 0L1 0L7 5L7 15.5L0 0.5Z" fill="#0000FF"/>
<path d="M14.5 0L13.5 0L8 5L8 15.5L14.5 0.5Z" fill="#000080"/>
<rect x="7" y="0" width="1" height="16" fill="#FF0000"/>
</svg>
<span class="t b" style="left:41px;top:59px;font-size:12px;color:#000">Menu Cliente</span>
<div style="left:19px;top:84px;width:3px;height:1px;background-image:repeating-linear-gradient(90deg,#808080 0 1px,transparent 1px 2px)"></div>
<div style="left:9px;top:80px;width:9px;height:9px;box-sizing:border-box;border:1px solid #919191;border-radius:1px;background:linear-gradient(#fff 0%,#fff 50%,#e6e6e6 100%)"></div>
<div style="left:11px;top:84px;width:5px;height:1px;background:#1f4f99"></div>
<svg style="left:23px;top:75px" width="16" height="17" viewBox="0 0 16 17" shape-rendering="crispEdges">
<path d="M0 0L1 0L7 5L7 15.5L0 0.5Z" fill="#0000FF"/>
<path d="M14.5 0L13.5 0L8 5L8 15.5L14.5 0.5Z" fill="#000080"/>
<rect x="7" y="0" width="1" height="16" fill="#FF0000"/>
</svg>
<div style="left:39px;top:74px;width:87px;height:18px;background:#3399FF"></div>
<span class="t b" style="left:41px;top:77px;font-size:12px;color:#fff">Menu Contrato</span>
<div style="left:38px;top:102px;width:3px;height:1px;background-image:repeating-linear-gradient(90deg,#808080 0 1px,transparent 1px 2px)"></div>
<div style="left:28px;top:98px;width:9px;height:9px;box-sizing:border-box;border:1px solid #919191;border-radius:1px;background:linear-gradient(#fff 0%,#fff 50%,#e6e6e6 100%)"></div>
<div style="left:30px;top:102px;width:5px;height:1px;background:#1f4f99"></div>
<svg style="left:42px;top:93px" width="16" height="17" viewBox="0 0 16 17" shape-rendering="crispEdges">
<path d="M0 0L1 0L7 5L7 15.5L0 0.5Z" fill="#0000FF"/>
<path d="M14.5 0L13.5 0L8 5L8 15.5L14.5 0.5Z" fill="#000080"/>
<rect x="7" y="0" width="1" height="16" fill="#FF0000"/>
</svg>
<span class="t b" style="left:60px;top:95px;font-size:12px;color:#000">Acordo</span>
<div style="left:53px;top:120px;width:8px;height:1px;background-image:repeating-linear-gradient(90deg,#808080 0 1px,transparent 1px 2px)"></div>
<svg style="left:61px;top:110px" width="17" height="18" viewBox="0 0 17 18" shape-rendering="crispEdges">
<path d="M1 10L2.5 9L6 12.5L16 2L16 7L6.5 17L5 17L1 13Z" fill="#000080"/>
<path d="M1 10L2.5 9L6 12.5L16 2L16 6L6.5 16L5 16L1 12Z" fill="#008000"/>
<path d="M1 10L2.5 9L6 12.5L16 2L16 3L6 13.5L2.5 10L1 11Z" fill="#00FF00"/>
</svg>
<span class="t b" style="left:79px;top:113px;font-size:12px;color:#000">Acesso a Pesquisa de Acordo</span>
<div style="left:57px;top:138px;width:3px;height:1px;background-image:repeating-linear-gradient(90deg,#808080 0 1px,transparent 1px 2px)"></div>
<div style="left:47px;top:134px;width:9px;height:9px;box-sizing:border-box;border:1px solid #919191;border-radius:1px;background:linear-gradient(#fff 0%,#fff 50%,#e6e6e6 100%)"></div>
<div style="left:49px;top:138px;width:5px;height:1px;background:#1f4f99"></div>
<div style="left:51px;top:136px;width:1px;height:5px;background:#1f4f99"></div>
<svg style="left:61px;top:129px" width="16" height="17" viewBox="0 0 16 17" shape-rendering="crispEdges">
<path d="M0 0L1 0L7 5L7 15.5L0 0.5Z" fill="#0000FF"/>
<path d="M14.5 0L13.5 0L8 5L8 15.5L14.5 0.5Z" fill="#000080"/>
<rect x="7" y="0" width="1" height="16" fill="#FF0000"/>
</svg>
<span class="t b" style="left:79px;top:131px;font-size:12px;color:#000">Cadastro de Acordo</span>
<div style="left:38px;top:156px;width:3px;height:1px;background-image:repeating-linear-gradient(90deg,#808080 0 1px,transparent 1px 2px)"></div>
<div style="left:28px;top:152px;width:9px;height:9px;box-sizing:border-box;border:1px solid #919191;border-radius:1px;background:linear-gradient(#fff 0%,#fff 50%,#e6e6e6 100%)"></div>
<div style="left:30px;top:156px;width:5px;height:1px;background:#1f4f99"></div>
<svg style="left:42px;top:147px" width="16" height="17" viewBox="0 0 16 17" shape-rendering="crispEdges">
<path d="M0 0L1 0L7 5L7 15.5L0 0.5Z" fill="#0000FF"/>
<path d="M14.5 0L13.5 0L8 5L8 15.5L14.5 0.5Z" fill="#000080"/>
<rect x="7" y="0" width="1" height="16" fill="#FF0000"/>
</svg>
<span class="t b" style="left:60px;top:149px;font-size:12px;color:#000">Contrato</span>
<div style="left:53px;top:174px;width:8px;height:1px;background-image:repeating-linear-gradient(90deg,#808080 0 1px,transparent 1px 2px)"></div>
<svg style="left:61px;top:164px" width="17" height="18" viewBox="0 0 17 18" shape-rendering="crispEdges">
<path d="M1 10L2.5 9L6 12.5L16 2L16 7L6.5 17L5 17L1 13Z" fill="#000080"/>
<path d="M1 10L2.5 9L6 12.5L16 2L16 6L6.5 16L5 16L1 12Z" fill="#008000"/>
<path d="M1 10L2.5 9L6 12.5L16 2L16 3L6 13.5L2.5 10L1 11Z" fill="#00FF00"/>
</svg>
<span class="t b" style="left:79px;top:167px;font-size:12px;color:#000">Acesso a Pesquisa de Contrato</span>
<div style="left:57px;top:192px;width:3px;height:1px;background-image:repeating-linear-gradient(90deg,#808080 0 1px,transparent 1px 2px)"></div>
<div style="left:47px;top:188px;width:9px;height:9px;box-sizing:border-box;border:1px solid #919191;border-radius:1px;background:linear-gradient(#fff 0%,#fff 50%,#e6e6e6 100%)"></div>
<div style="left:49px;top:192px;width:5px;height:1px;background:#1f4f99"></div>
<div style="left:51px;top:190px;width:1px;height:5px;background:#1f4f99"></div>
<svg style="left:61px;top:183px" width="16" height="17" viewBox="0 0 16 17" shape-rendering="crispEdges">
<path d="M0 0L1 0L7 5L7 15.5L0 0.5Z" fill="#0000FF"/>
<path d="M14.5 0L13.5 0L8 5L8 15.5L14.5 0.5Z" fill="#000080"/>
<rect x="7" y="0" width="1" height="16" fill="#FF0000"/>
</svg>
<span class="t b" style="left:79px;top:185px;font-size:12px;color:#000">Cadastro de Contrato</span>
<div style="left:53px;top:210px;width:8px;height:1px;background-image:repeating-linear-gradient(90deg,#808080 0 1px,transparent 1px 2px)"></div>
<svg style="left:61px;top:200px" width="17" height="18" viewBox="0 0 17 18" shape-rendering="crispEdges">
<path d="M1 10L2.5 9L6 12.5L16 2L16 7L6.5 17L5 17L1 13Z" fill="#000080"/>
<path d="M1 10L2.5 9L6 12.5L16 2L16 6L6.5 16L5 16L1 12Z" fill="#008000"/>
<path d="M1 10L2.5 9L6 12.5L16 2L16 3L6 13.5L2.5 10L1 11Z" fill="#00FF00"/>
</svg>
<span class="t b" style="left:79px;top:203px;font-size:12px;color:#000">Prorrogar Vigência/Reajustar Aluguel</span>
<div style="left:38px;top:228px;width:3px;height:1px;background-image:repeating-linear-gradient(90deg,#808080 0 1px,transparent 1px 2px)"></div>
<div style="left:28px;top:224px;width:9px;height:9px;box-sizing:border-box;border:1px solid #919191;border-radius:1px;background:linear-gradient(#fff 0%,#fff 50%,#e6e6e6 100%)"></div>
<div style="left:30px;top:228px;width:5px;height:1px;background:#1f4f99"></div>
<svg style="left:42px;top:219px" width="16" height="17" viewBox="0 0 16 17" shape-rendering="crispEdges">
<path d="M0 0L1 0L7 5L7 15.5L0 0.5Z" fill="#0000FF"/>
<path d="M14.5 0L13.5 0L8 5L8 15.5L14.5 0.5Z" fill="#000080"/>
<rect x="7" y="0" width="1" height="16" fill="#FF0000"/>
</svg>
<span class="t b" style="left:60px;top:221px;font-size:12px;color:#000">Local de Pagamento</span>
<div style="left:53px;top:246px;width:8px;height:1px;background-image:repeating-linear-gradient(90deg,#808080 0 1px,transparent 1px 2px)"></div>
<svg style="left:61px;top:236px" width="17" height="18" viewBox="0 0 17 18" shape-rendering="crispEdges">
<path d="M1 10L2.5 9L6 12.5L16 2L16 7L6.5 17L5 17L1 13Z" fill="#000080"/>
<path d="M1 10L2.5 9L6 12.5L16 2L16 6L6.5 16L5 16L1 12Z" fill="#008000"/>
<path d="M1 10L2.5 9L6 12.5L16 2L16 3L6 13.5L2.5 10L1 11Z" fill="#00FF00"/>
</svg>
<span class="t b" style="left:79px;top:239px;font-size:12px;color:#000">Acesso a Pesquisa de Local de Pagamento</span>
<div style="left:57px;top:264px;width:3px;height:1px;background-image:repeating-linear-gradient(90deg,#808080 0 1px,transparent 1px 2px)"></div>
<div style="left:47px;top:260px;width:9px;height:9px;box-sizing:border-box;border:1px solid #919191;border-radius:1px;background:linear-gradient(#fff 0%,#fff 50%,#e6e6e6 100%)"></div>
<div style="left:49px;top:264px;width:5px;height:1px;background:#1f4f99"></div>
<div style="left:51px;top:262px;width:1px;height:5px;background:#1f4f99"></div>
<svg style="left:61px;top:255px" width="16" height="17" viewBox="0 0 16 17" shape-rendering="crispEdges">
<path d="M0 0L1 0L7 5L7 15.5L0 0.5Z" fill="#0000FF"/>
<path d="M14.5 0L13.5 0L8 5L8 15.5L14.5 0.5Z" fill="#000080"/>
<rect x="7" y="0" width="1" height="16" fill="#FF0000"/>
</svg>
<span class="t b" style="left:79px;top:257px;font-size:12px;color:#000">Cadastro de Local de Pagamento</span>
<div style="left:19px;top:282px;width:3px;height:1px;background-image:repeating-linear-gradient(90deg,#808080 0 1px,transparent 1px 2px)"></div>
<div style="left:9px;top:278px;width:9px;height:9px;box-sizing:border-box;border:1px solid #919191;border-radius:1px;background:linear-gradient(#fff 0%,#fff 50%,#e6e6e6 100%)"></div>
<div style="left:11px;top:282px;width:5px;height:1px;background:#1f4f99"></div>
<div style="left:13px;top:280px;width:1px;height:5px;background:#1f4f99"></div>
<svg style="left:23px;top:273px" width="16" height="17" viewBox="0 0 16 17" shape-rendering="crispEdges">
<path d="M0 0L1 0L7 5L7 15.5L0 0.5Z" fill="#0000FF"/>
<path d="M14.5 0L13.5 0L8 5L8 15.5L14.5 0.5Z" fill="#000080"/>
<rect x="7" y="0" width="1" height="16" fill="#FF0000"/>
</svg>
<span class="t b" style="left:41px;top:275px;font-size:12px;color:#000">Menu Empresa</span>
<div style="left:19px;top:300px;width:3px;height:1px;background-image:repeating-linear-gradient(90deg,#808080 0 1px,transparent 1px 2px)"></div>
<div style="left:9px;top:296px;width:9px;height:9px;box-sizing:border-box;border:1px solid #919191;border-radius:1px;background:linear-gradient(#fff 0%,#fff 50%,#e6e6e6 100%)"></div>
<div style="left:11px;top:300px;width:5px;height:1px;background:#1f4f99"></div>
<div style="left:13px;top:298px;width:1px;height:5px;background:#1f4f99"></div>
<svg style="left:23px;top:291px" width="16" height="17" viewBox="0 0 16 17" shape-rendering="crispEdges">
<path d="M0 0L1 0L7 5L7 15.5L0 0.5Z" fill="#0000FF"/>
<path d="M14.5 0L13.5 0L8 5L8 15.5L14.5 0.5Z" fill="#000080"/>
<rect x="7" y="0" width="1" height="16" fill="#FF0000"/>
</svg>
<span class="t b" style="left:41px;top:293px;font-size:12px;color:#000">Menu Extrato</span>
<div style="left:19px;top:318px;width:3px;height:1px;background-image:repeating-linear-gradient(90deg,#808080 0 1px,transparent 1px 2px)"></div>
<div style="left:9px;top:314px;width:9px;height:9px;box-sizing:border-box;border:1px solid #919191;border-radius:1px;background:linear-gradient(#fff 0%,#fff 50%,#e6e6e6 100%)"></div>
<div style="left:11px;top:318px;width:5px;height:1px;background:#1f4f99"></div>
<div style="left:13px;top:316px;width:1px;height:5px;background:#1f4f99"></div>
<svg style="left:23px;top:309px" width="16" height="17" viewBox="0 0 16 17" shape-rendering="crispEdges">
<path d="M0 0L1 0L7 5L7 15.5L0 0.5Z" fill="#0000FF"/>
<path d="M14.5 0L13.5 0L8 5L8 15.5L14.5 0.5Z" fill="#000080"/>
<rect x="7" y="0" width="1" height="16" fill="#FF0000"/>
</svg>
<span class="t b" style="left:41px;top:311px;font-size:12px;color:#000">Menu Ferramentas</span>
<div style="left:19px;top:336px;width:3px;height:1px;background-image:repeating-linear-gradient(90deg,#808080 0 1px,transparent 1px 2px)"></div>
<div style="left:9px;top:332px;width:9px;height:9px;box-sizing:border-box;border:1px solid #919191;border-radius:1px;background:linear-gradient(#fff 0%,#fff 50%,#e6e6e6 100%)"></div>
<div style="left:11px;top:336px;width:5px;height:1px;background:#1f4f99"></div>
<div style="left:13px;top:334px;width:1px;height:5px;background:#1f4f99"></div>
<svg style="left:23px;top:327px" width="16" height="17" viewBox="0 0 16 17" shape-rendering="crispEdges">
<path d="M0 0L1 0L7 5L7 15.5L0 0.5Z" fill="#0000FF"/>
<path d="M14.5 0L13.5 0L8 5L8 15.5L14.5 0.5Z" fill="#000080"/>
<rect x="7" y="0" width="1" height="16" fill="#FF0000"/>
</svg>
<span class="t b" style="left:41px;top:329px;font-size:12px;color:#000">Menu Imóveis</span>
<div style="left:19px;top:354px;width:3px;height:1px;background-image:repeating-linear-gradient(90deg,#808080 0 1px,transparent 1px 2px)"></div>
<div style="left:9px;top:350px;width:9px;height:9px;box-sizing:border-box;border:1px solid #919191;border-radius:1px;background:linear-gradient(#fff 0%,#fff 50%,#e6e6e6 100%)"></div>
<div style="left:11px;top:354px;width:5px;height:1px;background:#1f4f99"></div>
<div style="left:13px;top:352px;width:1px;height:5px;background:#1f4f99"></div>
<svg style="left:23px;top:345px" width="16" height="17" viewBox="0 0 16 17" shape-rendering="crispEdges">
<path d="M0 0L1 0L7 5L7 15.5L0 0.5Z" fill="#0000FF"/>
<path d="M14.5 0L13.5 0L8 5L8 15.5L14.5 0.5Z" fill="#000080"/>
<rect x="7" y="0" width="1" height="16" fill="#FF0000"/>
</svg>
<span class="t b" style="left:41px;top:347px;font-size:12px;color:#000">Menu Imposto</span>
<div style="left:19px;top:372px;width:3px;height:1px;background-image:repeating-linear-gradient(90deg,#808080 0 1px,transparent 1px 2px)"></div>
<div style="left:9px;top:368px;width:9px;height:9px;box-sizing:border-box;border:1px solid #919191;border-radius:1px;background:linear-gradient(#fff 0%,#fff 50%,#e6e6e6 100%)"></div>
<div style="left:11px;top:372px;width:5px;height:1px;background:#1f4f99"></div>
<div style="left:13px;top:370px;width:1px;height:5px;background:#1f4f99"></div>
<svg style="left:23px;top:363px" width="16" height="17" viewBox="0 0 16 17" shape-rendering="crispEdges">
<path d="M0 0L1 0L7 5L7 15.5L0 0.5Z" fill="#0000FF"/>
<path d="M14.5 0L13.5 0L8 5L8 15.5L14.5 0.5Z" fill="#000080"/>
<rect x="7" y="0" width="1" height="16" fill="#FF0000"/>
</svg>
<span class="t b" style="left:41px;top:365px;font-size:12px;color:#000">Menu Lançamento</span>
<div style="left:19px;top:390px;width:3px;height:1px;background-image:repeating-linear-gradient(90deg,#808080 0 1px,transparent 1px 2px)"></div>
<div style="left:9px;top:386px;width:9px;height:9px;box-sizing:border-box;border:1px solid #919191;border-radius:1px;background:linear-gradient(#fff 0%,#fff 50%,#e6e6e6 100%)"></div>
<div style="left:11px;top:390px;width:5px;height:1px;background:#1f4f99"></div>
<div style="left:13px;top:388px;width:1px;height:5px;background:#1f4f99"></div>
<svg style="left:23px;top:381px" width="16" height="17" viewBox="0 0 16 17" shape-rendering="crispEdges">
<path d="M0 0L1 0L7 5L7 15.5L0 0.5Z" fill="#0000FF"/>
<path d="M14.5 0L13.5 0L8 5L8 15.5L14.5 0.5Z" fill="#000080"/>
<rect x="7" y="0" width="1" height="16" fill="#FF0000"/>
</svg>
<span class="t b" style="left:41px;top:383px;font-size:12px;color:#000">Menu Movimentação</span>
<div style="left:19px;top:408px;width:3px;height:1px;background-image:repeating-linear-gradient(90deg,#808080 0 1px,transparent 1px 2px)"></div>
<div style="left:9px;top:404px;width:9px;height:9px;box-sizing:border-box;border:1px solid #919191;border-radius:1px;background:linear-gradient(#fff 0%,#fff 50%,#e6e6e6 100%)"></div>
<div style="left:11px;top:408px;width:5px;height:1px;background:#1f4f99"></div>
<div style="left:13px;top:406px;width:1px;height:5px;background:#1f4f99"></div>
<svg style="left:23px;top:399px" width="16" height="17" viewBox="0 0 16 17" shape-rendering="crispEdges">
<path d="M0 0L1 0L7 5L7 15.5L0 0.5Z" fill="#0000FF"/>
<path d="M14.5 0L13.5 0L8 5L8 15.5L14.5 0.5Z" fill="#000080"/>
<rect x="7" y="0" width="1" height="16" fill="#FF0000"/>
</svg>
<span class="t b" style="left:41px;top:401px;font-size:12px;color:#000">Menu Recibo</span>
<div style="left:19px;top:426px;width:3px;height:1px;background-image:repeating-linear-gradient(90deg,#808080 0 1px,transparent 1px 2px)"></div>
<div style="left:9px;top:422px;width:9px;height:9px;box-sizing:border-box;border:1px solid #919191;border-radius:1px;background:linear-gradient(#fff 0%,#fff 50%,#e6e6e6 100%)"></div>
<div style="left:11px;top:426px;width:5px;height:1px;background:#1f4f99"></div>
<div style="left:13px;top:424px;width:1px;height:5px;background:#1f4f99"></div>
<svg style="left:23px;top:417px" width="16" height="17" viewBox="0 0 16 17" shape-rendering="crispEdges">
<path d="M0 0L1 0L7 5L7 15.5L0 0.5Z" fill="#0000FF"/>
<path d="M14.5 0L13.5 0L8 5L8 15.5L14.5 0.5Z" fill="#000080"/>
<rect x="7" y="0" width="1" height="16" fill="#FF0000"/>
</svg>
<span class="t b" style="left:41px;top:419px;font-size:12px;color:#000">Menu Relatório</span>
</div>
<div style="left:569px;top:584px;width:279px;height:1px;background:#FFFFFF"></div>
<div style="left:569px;top:584px;width:1px;height:31px;background:#A0A0A0"></div>
<div style="left:570px;top:585px;width:1px;height:29px;background:#FFFFFF"></div>
<div style="left:569px;top:614px;width:279px;height:1px;background:#A0A0A0"></div>
<div style="left:847px;top:584px;width:1px;height:31px;background:#A0A0A0"></div>
<div style="left:569px;top:615px;width:280px;height:1px;background:#FFFFFF"></div>
<div style="left:848px;top:584px;width:1px;height:32px;background:#FFFFFF"></div>
<div class="btn" style="left:578px;top:588px;width:125px;height:23px"></div>
<svg style="left:595px;top:596px" width="16" height="12" viewBox="0 0 16 12">
<path d="M1.5 5.5L4 3.5L6.5 6L13.5 0.8L15 2.5L6.5 10.5Z" fill="#1a8a1a"/>
<path d="M2.6 5.5L4 4.5L6.5 7L13.5 1.8L14 2.5L6.5 9.3Z" fill="#3cc43c"/>
</svg>
<span class="t" style="left:615px;top:594px;font-size:12px;color:#000;transform:scaleX(0.885);transform-origin:0 0">Habilitar Todos</span>
<div class="btn" style="left:711px;top:588px;width:125px;height:23px"></div>
<svg style="left:724px;top:593px" width="15" height="15" viewBox="0 0 15 15">
<path d="M2.5 2.5L12.5 12.5M12.5 2.5L2.5 12.5" stroke="#c00000" stroke-width="3.6" stroke-linecap="square"/>
<path d="M2.5 2.5L12.5 12.5M12.5 2.5L2.5 12.5" stroke="#ff4020" stroke-width="2" stroke-linecap="square"/>
</svg>
<span class="t" style="left:743px;top:594px;font-size:12px;color:#000;transform:scaleX(0.885);transform-origin:0 0">Desabilitar Todos</span>
<div style="left:10px;top:618px;width:840px;height:1px;background:#A0A0A0"></div>
<div style="left:10px;top:618px;width:1px;height:31px;background:#A0A0A0"></div>
<div style="left:11px;top:619px;width:838px;height:1px;background:#FFFFFF"></div>
<div style="left:11px;top:619px;width:1px;height:29px;background:#FFFFFF"></div>
<div style="left:10px;top:648px;width:840px;height:1px;background:#FFFFFF"></div>
<div style="left:849px;top:618px;width:1px;height:31px;background:#FFFFFF"></div>
<div style="left:11px;top:647px;width:838px;height:1px;background:#A0A0A0"></div>
<div style="left:848px;top:619px;width:1px;height:29px;background:#A0A0A0"></div>
<div style="left:767px;top:622px;width:83px;height:23px;overflow:hidden"><div class="btn" style="left:0;top:0;width:90px;height:23px"></div></div>
<svg style="left:790px;top:625px" width="18" height="17" viewBox="0 0 18 17" shape-rendering="crispEdges">
<defs><pattern id="ck" width="2" height="2" patternUnits="userSpaceOnUse"><rect width="2" height="2" fill="#808040"/><rect width="1" height="1" fill="#c0c080"/><rect x="1" y="1" width="1" height="1" fill="#c0c080"/></pattern></defs>
<path d="M6.5 1.5H16.5V13.5H6.5Z" fill="#c0c0c0" stroke="#000"/>
<path d="M8.5 4.5L16.5 1.5V13.5L8.5 16.5Z" fill="url(#ck)" stroke="#000"/>
<path d="M9 5V16" stroke="#fff"/>
<rect x="11" y="9" width="2" height="2" fill="#000"/>
<path d="M1.5 8L5.5 4.5V6.5H7.5V9.5H5.5V11.5Z" fill="#00FFFF" stroke="#000" stroke-width="1"/>
</svg>
<span class="t" style="left:813px;top:628px;font-size:12.5px;color:#000;transform:scaleX(0.85);transform-origin:0 0">Sair</span>
<div style="left:813px;top:639px;width:8px;height:1px;background:#000"></div>
</body></html>
